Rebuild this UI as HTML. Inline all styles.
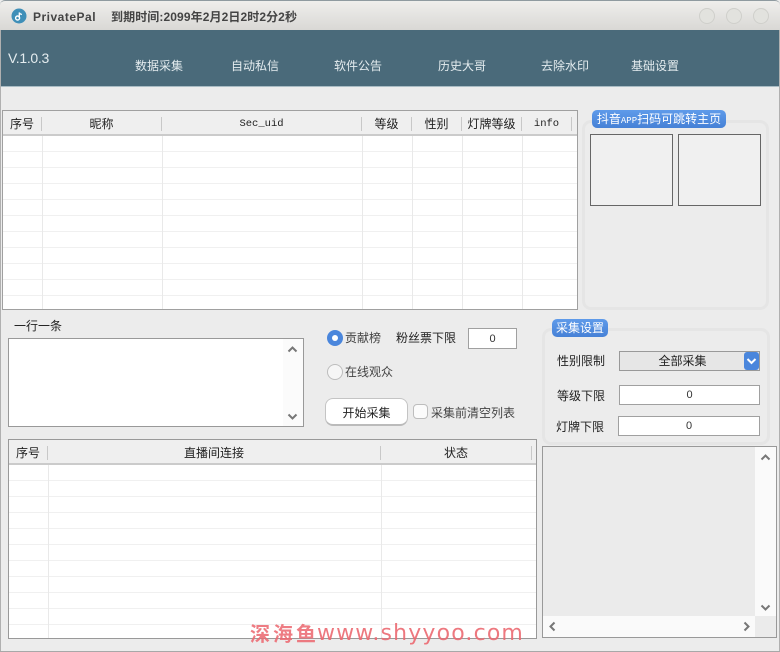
<!DOCTYPE html>
<html><head><meta charset="utf-8"><style>
html,body{margin:0;padding:0;width:780px;height:652px;overflow:hidden;background:#ececec}
body{position:relative;font-family:"Liberation Sans","Noto Sans CJK SC",sans-serif;font-size:13px;color:#222}
.a,.t{position:absolute}
.t{white-space:nowrap;line-height:16px;text-align:center}
.box{position:absolute;box-sizing:border-box;border:1px solid #a0a0a0}
.grid{position:absolute;background-color:#fff;background-image:repeating-linear-gradient(to bottom,#fff 0,#fff 15px,#f0f0f0 15px,#f0f0f0 16px)}
.v{position:absolute;width:1px;background:#e9e9e9}
.s{position:absolute;width:1px;background:#c8c8c8}
.hd{position:absolute;background:#efefef;border-bottom:2px solid #cbcbcb;box-sizing:border-box}
.tag{position:absolute;background:linear-gradient(#5f9bea,#4681d6);border-radius:5px;color:#fff;text-align:center;white-space:nowrap;font-size:12px;line-height:18px}
.group{position:absolute;box-sizing:border-box;border:3px solid #e5e5e5;border-radius:9px}
.in{position:absolute;box-sizing:border-box;border:1px solid #a0a0a0;background:#fff;text-align:center;font-size:11px;line-height:19px;color:#333}
.nav{color:#e4ecef;font-size:12px}
</style></head><body>

<!-- title bar -->
<div class="a" style="left:0;top:0;width:780px;height:30px;background:linear-gradient(#efeeec,#d9d8d5);border-top:1px solid #8f9aa0;box-sizing:border-box;border-radius:5px 5px 0 0"></div>
<svg class="a" style="left:11px;top:8px" width="16" height="16" viewBox="0 0 16 16"><circle cx="8" cy="8" r="7.5" fill="#3f8fb8"/><circle cx="6.6" cy="10" r="2" fill="none" stroke="#fff" stroke-width="1.4"/><path d="M8.3 10V4.5c.4 1.4 1.6 1.8 2.6 2" fill="none" stroke="#fff" stroke-width="1.3"/></svg>
<div class="t" style="left:33px;top:9px;font-size:12px;font-weight:bold;color:#444;letter-spacing:.5px">PrivatePal</div>
<div class="t" style="left:111px;top:9px;font-size:12px;font-weight:bold;color:#444;letter-spacing:.1px">到期时间:2099年2月2日2时2分2秒</div>
<div class="a" style="left:699px;top:8px;width:14px;height:14px;border:1px solid #cfcfcb;border-radius:50%;background:#e2e2de"></div>
<div class="a" style="left:726px;top:8px;width:14px;height:14px;border:1px solid #cfcfcb;border-radius:50%;background:#e2e2de"></div>
<div class="a" style="left:753px;top:8px;width:14px;height:14px;border:1px solid #cfcfcb;border-radius:50%;background:#e2e2de"></div>

<!-- nav -->
<div class="a" style="left:1px;top:30px;width:778px;height:57px;background:#4a6a7a;border-bottom:1px solid #a9bcc4;box-sizing:border-box"></div>
<div class="t" style="left:8px;top:50px;font-size:14px;color:#e4ecef;letter-spacing:-.3px">V.1.0.3</div>
<div class="t nav" style="left:135px;top:58px">数据采集</div>
<div class="t nav" style="left:231px;top:58px">自动私信</div>
<div class="t nav" style="left:334px;top:58px">软件公告</div>
<div class="t nav" style="left:438px;top:58px">历史大哥</div>
<div class="t nav" style="left:541px;top:58px">去除水印</div>
<div class="t nav" style="left:631px;top:58px">基础设置</div>

<!-- top table -->
<div class="box" style="left:2px;top:110px;width:576px;height:200px"></div>
<div class="grid" style="left:3px;top:136px;width:574px;height:173px"></div>
<div class="v" style="left:42px;top:136px;height:173px"></div>
<div class="v" style="left:162px;top:136px;height:173px"></div>
<div class="v" style="left:362px;top:136px;height:173px"></div>
<div class="v" style="left:412px;top:136px;height:173px"></div>
<div class="v" style="left:462px;top:136px;height:173px"></div>
<div class="v" style="left:522px;top:136px;height:173px"></div>
<div class="hd" style="left:3px;top:111px;width:574px;height:25px"></div>
<div class="s" style="left:41px;top:117px;height:14px"></div>
<div class="s" style="left:161px;top:117px;height:14px"></div>
<div class="s" style="left:361px;top:117px;height:14px"></div>
<div class="s" style="left:411px;top:117px;height:14px"></div>
<div class="s" style="left:461px;top:117px;height:14px"></div>
<div class="s" style="left:521px;top:117px;height:14px"></div>
<div class="s" style="left:571px;top:117px;height:14px"></div>
<div class="t" style="left:3px;top:116px;width:38px;font-size:12px">序号</div>
<div class="t" style="left:42px;top:116px;width:119px;font-size:12px">昵称</div>
<div class="t" style="left:162px;top:116px;width:199px;font-size:10.5px;font-family:'Liberation Mono',monospace">Sec_uid</div>
<div class="t" style="left:362px;top:116px;width:49px;font-size:12px">等级</div>
<div class="t" style="left:412px;top:116px;width:49px;font-size:12px">性别</div>
<div class="t" style="left:462px;top:116px;width:59px;font-size:12px">灯牌等级</div>
<div class="t" style="left:522px;top:116px;width:49px;font-size:10.5px;font-family:'Liberation Mono',monospace">info</div>

<!-- QR group -->
<div class="group" style="left:582px;top:120px;width:187px;height:190px"></div>
<div class="tag" style="left:592px;top:110px;width:134px;height:18px">抖音<span style="font-size:9px;font-family:'Liberation Mono',monospace">APP</span>扫码可跳转主页</div>
<div class="box" style="left:590px;top:134px;width:83px;height:72px;border-color:#666;background:#f0f0f0"></div>
<div class="box" style="left:678px;top:134px;width:83px;height:72px;border-color:#666;background:#f0f0f0"></div>

<!-- list input -->
<div class="t" style="left:14px;top:318px;font-size:12px">一行一条</div>
<div class="box" style="left:8px;top:338px;width:296px;height:89px;background:#fff;border-color:#999"></div>
<div class="a" style="left:283px;top:339px;width:20px;height:87px;background:#fbfbfb"></div>
<svg class="a" style="left:287px;top:345px" width="11" height="8"><path d="M1.5 6.5 5.5 2.5 9.5 6.5" fill="none" stroke="#777" stroke-width="2"/></svg>
<svg class="a" style="left:287px;top:413px" width="11" height="8"><path d="M1.5 1.5 5.5 5.5 9.5 1.5" fill="none" stroke="#777" stroke-width="2"/></svg>

<!-- radios -->
<div class="a" style="left:327px;top:330px;width:16px;height:16px;border-radius:50%;background:#4a86dc"></div>
<div class="a" style="left:332px;top:335px;width:6px;height:6px;border-radius:50%;background:#fff"></div>
<div class="t" style="left:345px;top:330px;font-size:12px;color:#444">贡献榜</div>
<div class="t" style="left:396px;top:330px;font-size:12px">粉丝票下限</div>
<div class="in" style="left:468px;top:328px;width:49px;height:21px;line-height:20px">0</div>
<div class="a" style="left:327px;top:364px;width:14px;height:14px;border-radius:50%;background:#f6f6f6;border:1px solid #bdbdbd"></div>
<div class="t" style="left:345px;top:364px;font-size:12px;color:#444">在线观众</div>
<div class="a" style="left:325px;top:398px;width:83px;height:28px;box-sizing:border-box;border:1px solid #c4c4c4;border-bottom:2px solid #bbb;border-radius:8px;background:#fff"></div>
<div class="t" style="left:325px;top:405px;width:83px;font-size:12px">开始采集</div>
<div class="a" style="left:413px;top:404px;width:15px;height:15px;box-sizing:border-box;border:1px solid #bdbdbd;border-radius:4px;background:#fbfbfb"></div>
<div class="t" style="left:431px;top:405px;font-size:12px;color:#444">采集前清空列表</div>

<!-- settings group -->
<div class="group" style="left:542px;top:328px;width:228px;height:117px"></div>
<div class="tag" style="left:552px;top:319px;width:56px;height:18px">采集设置</div>
<div class="t" style="left:557px;top:353px;font-size:12px">性别限制</div>
<div class="box" style="left:619px;top:351px;width:141px;height:20px;background:#e6e6e6;border-color:#999"></div>
<div class="t" style="left:620px;top:353px;width:125px;font-size:12px">全部采集</div>
<div class="a" style="left:744px;top:352px;width:15px;height:18px;background:#4a86dc;border-radius:3px"></div>
<svg class="a" style="left:746px;top:357px" width="11" height="9"><path d="M1.5 2 5.5 6 9.5 2" fill="none" stroke="#fff" stroke-width="2"/></svg>
<div class="t" style="left:557px;top:388px;font-size:12px">等级下限</div>
<div class="in" style="left:619px;top:385px;width:141px;height:20px">0</div>
<div class="t" style="left:556px;top:419px;font-size:12px">灯牌下限</div>
<div class="in" style="left:618px;top:416px;width:142px;height:20px">0</div>

<!-- bottom table -->
<div class="box" style="left:8px;top:439px;width:529px;height:200px;border-color:#999"></div>
<div class="grid" style="left:9px;top:465px;width:527px;height:173px"></div>
<div class="v" style="left:48px;top:465px;height:173px"></div>
<div class="v" style="left:381px;top:465px;height:173px"></div>
<div class="hd" style="left:9px;top:440px;width:527px;height:25px"></div>
<div class="s" style="left:47px;top:446px;height:14px"></div>
<div class="s" style="left:380px;top:446px;height:14px"></div>
<div class="s" style="left:531px;top:446px;height:14px"></div>
<div class="t" style="left:9px;top:445px;width:38px;font-size:12px">序号</div>
<div class="t" style="left:48px;top:445px;width:332px;font-size:12px">直播间连接</div>
<div class="t" style="left:381px;top:445px;width:150px;font-size:12px">状态</div>

<!-- log panel -->
<div class="box" style="left:542px;top:446px;width:235px;height:192px;border-color:#999;background:#ebebeb"></div>
<div class="a" style="left:755px;top:447px;width:21px;height:169px;background:#fafafa"></div>
<div class="a" style="left:543px;top:616px;width:212px;height:21px;background:#fafafa"></div>
<svg class="a" style="left:760px;top:453px" width="11" height="8"><path d="M1.5 6.5 5.5 2.5 9.5 6.5" fill="none" stroke="#777" stroke-width="2"/></svg>
<svg class="a" style="left:760px;top:604px" width="11" height="8"><path d="M1.5 1.5 5.5 5.5 9.5 1.5" fill="none" stroke="#777" stroke-width="2"/></svg>
<svg class="a" style="left:548px;top:621px" width="8" height="11"><path d="M6.5 1.5 2.5 5.5 6.5 9.5" fill="none" stroke="#777" stroke-width="2"/></svg>
<svg class="a" style="left:743px;top:621px" width="8" height="11"><path d="M1.5 1.5 5.5 5.5 1.5 9.5" fill="none" stroke="#777" stroke-width="2"/></svg>

<!-- window edges -->
<div class="a" style="left:0;top:651px;width:780px;height:1px;background:#a8a8a8"></div>
<div class="a" style="left:0;top:30px;width:1px;height:621px;background:#b0b0b0"></div>
<div class="a" style="left:779px;top:30px;width:1px;height:621px;background:#b0b0b0"></div>

<!-- watermark -->
<div class="t" style="left:250px;top:620px;font-size:20px;line-height:26px;font-weight:bold;color:#ec6a72;opacity:.88;letter-spacing:3px;font-family:'Noto Sans CJK SC',sans-serif">深海鱼</div>
<div class="t" style="left:317px;top:621px;font-size:22px;line-height:26px;color:#ec6a72;opacity:.9;letter-spacing:1.15px;font-family:'DejaVu Sans',sans-serif">www.shyyoo.com</div>
</body></html>
